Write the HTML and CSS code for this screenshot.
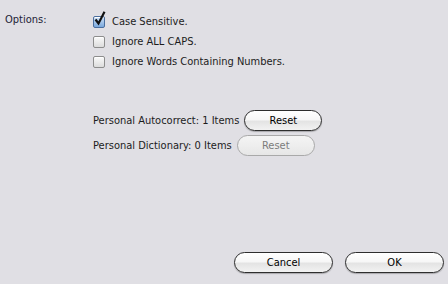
FILE: index.html
```html
<!DOCTYPE html>
<html>
<head>
<meta charset="utf-8">
<link rel="stylesheet" href="styles.css">
</head>
<body>
<div class="dialog">
  <div class="options">
    <div class="label">Options:</div>
    <div class="checks">
      <label class="check">
        <span class="box checked">
          <svg class="tick" width="14" height="16" viewBox="0 0 14 16"><path d="M2.5 8.5 L5.5 12.5 L11.5 0.8" fill="none" stroke="#111" stroke-width="2.2" stroke-linejoin="miter"/></svg>
        </span>
        <span class="text">Case Sensitive.</span>
      </label>
      <label class="check">
        <span class="box"></span>
        <span class="text">Ignore ALL CAPS.</span>
      </label>
      <label class="check">
        <span class="box"></span>
        <span class="text">Ignore Words Containing Numbers.</span>
      </label>
    </div>
  </div>
  <div class="personal">
    <div class="prow">
      <span class="text">Personal Autocorrect: 1 Items</span>
      <button class="btn reset">Reset</button>
    </div>
    <div class="prow">
      <span class="text">Personal Dictionary: 0 Items</span>
      <button class="btn reset" disabled>Reset</button>
    </div>
  </div>
  <div class="footer">
    <button class="btn wide">Cancel</button>
    <button class="btn wide">OK</button>
  </div>
</div>
</body>
</html>
```

FILE: styles.css
```css
html, body {
  margin: 0;
  padding: 0;
  background: #e0dfe4;
}
body {
  font-family: "DejaVu Sans Condensed", "DejaVu Sans", sans-serif;
  font-size: 11px;
  color: #1c1c1c;
}
.dialog {
  width: 448px;
  height: 284px;
  display: flex;
  flex-direction: column;
  box-sizing: border-box;
}
.options {
  display: flex;
  padding-top: 11px;
}
.label {
  width: 93px;
  padding-left: 5px;
  box-sizing: border-box;
  line-height: 18px;
  color: #232336;
}
.checks {
  display: flex;
  flex-direction: column;
}
.check {
  display: flex;
  align-items: center;
  height: 20px;
}
.box {
  position: relative;
  width: 10px;
  height: 10px;
  border: 1px solid #8d8d8d;
  border-radius: 2px;
  background: linear-gradient(#fafafa, #dcdcdc);
  margin-right: 7px;
  margin-top: 2px;
  box-shadow: inset 0 1px 0 #fff;
}
.box.checked {
  border-color: #4a6e9e;
  background: linear-gradient(#cfe2f7, #7aa8dc);
}
.tick {
  position: absolute;
  left: -1px;
  top: -6px;
}
.personal {
  display: flex;
  flex-direction: column;
  padding-left: 93px;
  margin-top: 39px;
  gap: 4px;
}
.prow {
  display: flex;
  align-items: center;
  gap: 5px;
}
.btn {
  font-family: "DejaVu Sans Condensed", "DejaVu Sans", sans-serif;
  font-size: 11px;
  height: 21px;
  border: 1px solid #2e2e2e;
  border-radius: 11px;
  background: linear-gradient(#ffffff 0%, #f7f7f7 45%, #e4e4e4 55%, #f2f2f2 100%);
  color: #000;
  padding: 0;
  box-shadow: 0 1px 1px rgba(0,0,0,0.25);
}
.btn.reset {
  width: 78px;
}
.btn:disabled {
  border-color: #a9a9a9;
  color: #7c7c7c;
  background: linear-gradient(#f4f4f4 0%, #eeeeee 50%, #e6e6e6 100%);
  box-shadow: none;
}
.footer {
  margin-top: auto;
  display: flex;
  justify-content: flex-end;
  gap: 12px;
  padding-right: 4px;
  padding-bottom: 11px;
}
.btn.wide {
  width: 99px;
}
```
